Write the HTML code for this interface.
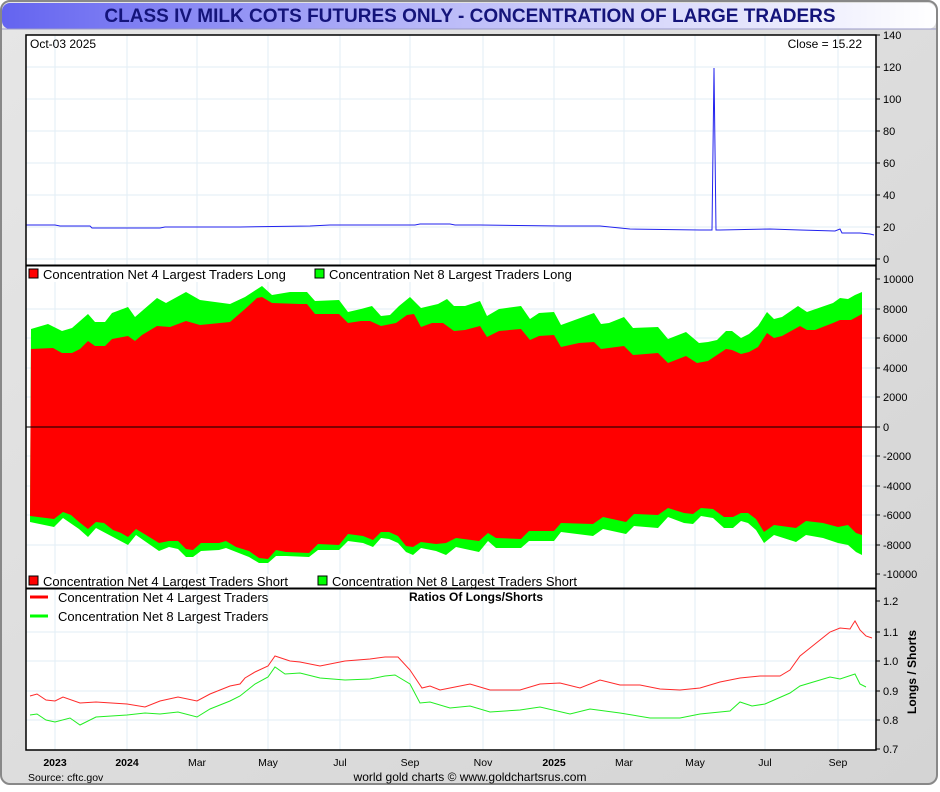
<!DOCTYPE html>
<html><head><meta charset="utf-8"><style>
html,body{margin:0;padding:0;background:#fff;}
body{width:940px;height:787px;overflow:hidden;font-family:"Liberation Sans",sans-serif;}
</style></head><body>
<svg width="940" height="787" viewBox="0 0 940 787" xmlns="http://www.w3.org/2000/svg" font-family="Liberation Sans, sans-serif">
<defs>
<linearGradient id="tg" x1="0" x2="1" y1="0" y2="0"><stop offset="0" stop-color="#6464f0"/><stop offset="0.45" stop-color="#b8b8f8"/><stop offset="1" stop-color="#ffffff"/></linearGradient>
<linearGradient id="bg" x1="0" x2="1" y1="0" y2="1"><stop offset="0" stop-color="#e6e6e6"/><stop offset="1" stop-color="#d4d4d4"/></linearGradient>
</defs>
<rect x="0" y="0" width="940" height="787" fill="#fff"/>
<rect x="1" y="1" width="936" height="783" rx="9" fill="url(#bg)" stroke="#888" stroke-width="2"/>
<rect x="2" y="3" width="934" height="26" rx="8" fill="url(#tg)"/>
<line x1="2" y1="29" x2="936" y2="29" stroke="#9a9ac8"/>
<text x="470" y="22" text-anchor="middle" font-size="19" font-weight="bold" fill="#14147a">CLASS IV MILK COTS FUTURES ONLY - CONCENTRATION OF LARGE TRADERS</text>
<rect x="26" y="35" width="850" height="715" fill="#fff"/>
<g stroke="#e2eef6" stroke-width="1">
<line x1="55" y1="35" x2="55" y2="750"/><line x1="127" y1="35" x2="127" y2="750"/><line x1="197" y1="35" x2="197" y2="750"/><line x1="268" y1="35" x2="268" y2="750"/><line x1="340" y1="35" x2="340" y2="750"/><line x1="410" y1="35" x2="410" y2="750"/><line x1="483" y1="35" x2="483" y2="750"/><line x1="554" y1="35" x2="554" y2="750"/><line x1="624" y1="35" x2="624" y2="750"/><line x1="695" y1="35" x2="695" y2="750"/><line x1="765" y1="35" x2="765" y2="750"/><line x1="838" y1="35" x2="838" y2="750"/>
<line x1="26" y1="67" x2="876" y2="67"/><line x1="26" y1="99" x2="876" y2="99"/><line x1="26" y1="131" x2="876" y2="131"/><line x1="26" y1="163" x2="876" y2="163"/><line x1="26" y1="195" x2="876" y2="195"/><line x1="26" y1="227" x2="876" y2="227"/><line x1="26" y1="259" x2="876" y2="259"/>
<line x1="26" y1="309" x2="876" y2="309"/><line x1="26" y1="338" x2="876" y2="338"/><line x1="26" y1="368" x2="876" y2="368"/><line x1="26" y1="397" x2="876" y2="397"/><line x1="26" y1="456" x2="876" y2="456"/><line x1="26" y1="486" x2="876" y2="486"/><line x1="26" y1="515" x2="876" y2="515"/><line x1="26" y1="545" x2="876" y2="545"/>
<line x1="26" y1="632" x2="876" y2="632"/><line x1="26" y1="661" x2="876" y2="661"/><line x1="26" y1="691" x2="876" y2="691"/><line x1="26" y1="720" x2="876" y2="720"/>
</g>
<!-- panel1 -->
<polyline fill="none" stroke="#2222ee" stroke-width="1" points="26,225 55,225 60,226 90,226 92,228 160,228 165,227 240,227 310,226 330,225 415,225 420,224 450,224 455,225 480,225 560,226 600,226 630,229 700,230 712,230 714,68 716,230 720,230 770,229 800,230 835,231 840,229 842,233 860,233 870,234 874,235"/>
<text x="30" y="48" font-size="12" fill="#000">Oct-03  2025</text>
<text x="862" y="48" font-size="12" fill="#000" text-anchor="end">Close = 15.22</text>
<!-- panel2 -->
<polygon fill="#00ff00" points="31,329 48,324 62,331 72,328 88,314 95,322 105,322 112,313 128,307 135,317 157,298 166,303 186,292 200,300 230,304 245,297 262,286 272,295 290,292 307,292 315,301 339,300 348,312 361,309 372,306 381,316 390,315 399,306 410,297 421,308 438,304 447,299 454,306 465,306 480,301 487,316 499,309 521,306 530,319 539,313 554,312 561,325 594,313 601,324 609,323 624,317 633,328 658,327 668,339 686,332 699,343 708,342 717,340 726,331 732,331 741,338 749,334 758,326 767,312 774,319 782,317 798,306 807,312 833,303 840,298 848,299 855,295 862,292
862,555 856,552 848,545 838,543 823,538 806,535 796,542 774,535 764,543 756,530 748,523 741,521 733,528 724,528 713,518 701,516 693,524 684,523 668,517 658,528 634,526 626,534 603,529 593,536 561,532 554,541 529,541 521,548 496,548 488,541 479,552 456,547 446,555 436,551 421,548 413,555 406,552 398,543 389,539 381,538 373,547 363,543 348,541 339,550 318,550 309,557 286,556 276,556 268,563 259,563 249,557 226,548 219,550 201,551 193,557 186,557 178,549 169,547 159,551 136,535 128,545 113,537 96,528 88,537 79,529 63,518 54,527 30,522"/>
<polygon fill="#ff0000" points="31,349 53,348 62,353 72,353 80,349 88,341 95,346 105,346 112,339 128,336 135,341 142,335 157,326 170,327 186,321 200,325 230,322 245,309 257,298 262,297 272,303 300,304 307,304 315,314 339,314 348,323 361,321 370,321 381,326 396,323 407,315 414,314 421,327 432,323 443,323 454,331 465,330 480,326 487,337 499,331 521,329 530,340 539,336 554,335 561,347 579,343 594,342 601,349 624,346 633,355 658,353 668,363 686,356 697,363 708,361 726,349 732,350 741,354 749,352 758,347 767,333 774,338 782,336 800,326 807,330 815,330 833,323 840,320 851,320 862,314
862,535 856,533 848,525 838,527 823,523 806,521 796,528 774,525 764,532 756,519 748,513 741,513 733,517 724,517 713,509 701,508 693,514 684,513 668,508 658,515 634,514 626,522 603,517 593,524 561,523 554,531 529,531 521,539 496,538 488,533 479,541 456,538 446,543 436,544 421,542 413,547 406,546 398,536 389,532 381,532 373,540 363,536 348,534 339,545 318,544 309,553 286,552 276,550 268,559 259,558 249,551 236,547 226,541 219,543 201,543 193,550 186,549 178,541 169,541 159,543 146,535 136,529 128,537 121,533 113,530 104,523 96,522 88,529 79,522 71,515 63,512 54,519 30,516"/>
<line x1="26" y1="427" x2="876" y2="427" stroke="#000" stroke-width="1"/>
<rect x="27" y="266" width="560" height="16" fill="#fff"/>
<rect x="29" y="269" width="9" height="9" fill="#ff0000" stroke="#000" stroke-width="1"/>
<text x="43" y="279" font-size="13" fill="#000">Concentration Net 4 Largest Traders Long</text>
<rect x="315" y="269" width="9" height="9" fill="#00ff00" stroke="#000" stroke-width="1"/>
<text x="329" y="279" font-size="13" fill="#000">Concentration Net 8 Largest Traders Long</text>
<rect x="27" y="574" width="560" height="14" fill="#fff"/>
<rect x="29" y="576" width="9" height="9" fill="#ff0000" stroke="#000" stroke-width="1"/>
<text x="43" y="586" font-size="13" fill="#000">Concentration Net 4 Largest Traders Short</text>
<rect x="318" y="576" width="9" height="9" fill="#00ff00" stroke="#000" stroke-width="1"/>
<text x="332" y="586" font-size="13" fill="#000">Concentration Net 8 Largest Traders Short</text>
<!-- panel3 -->
<polyline fill="none" stroke="#ff2a2a" stroke-width="1" points="30,696 37,694 46,700 55,701 63,697 80,703 96,702 127,704 145,707 160,701 178,697 197,701 210,694 230,686 240,684 245,678 255,672 268,666 275,656 290,661 300,662 320,666 345,661 370,659 385,657 398,657 410,670 422,688 430,686 440,690 450,688 470,684 490,690 520,690 540,684 560,683 580,688 600,680 620,685 640,685 660,689 680,690 700,688 720,682 740,678 760,676 780,676 790,670 800,656 815,644 830,632 840,628 850,629 853,624 855,621 860,630 866,636 872,638"/>
<polyline fill="none" stroke="#22ee22" stroke-width="1" points="30,715 37,714 46,720 55,722 70,718 80,725 96,717 127,715 145,713 160,714 178,712 197,717 210,709 230,701 240,696 245,692 255,684 268,677 275,667 285,674 300,673 320,678 345,680 370,679 385,676 395,675 410,684 420,703 430,702 450,708 470,706 490,712 520,710 540,707 570,714 590,709 620,713 650,718 680,718 700,714 720,712 730,711 740,702 752,706 765,704 790,693 800,686 820,680 830,677 840,679 855,674 860,684 866,687"/>
<line x1="30" y1="597" x2="48" y2="597" stroke="#ff0000" stroke-width="3"/>
<text x="58" y="602" font-size="13" fill="#000">Concentration Net 4 Largest Traders</text>
<line x1="30" y1="616" x2="48" y2="616" stroke="#00ff00" stroke-width="3"/>
<text x="58" y="621" font-size="13" fill="#000">Concentration Net 8 Largest Traders</text>
<text x="476" y="601" font-size="12" font-weight="bold" text-anchor="middle" fill="#000">Ratios Of Longs/Shorts</text>
<!-- frames -->
<rect x="26" y="35" width="850" height="715" fill="none" stroke="#000" stroke-width="1.5"/>
<line x1="26" y1="265.5" x2="876" y2="265.5" stroke="#000" stroke-width="2"/>
<line x1="26" y1="588.5" x2="876" y2="588.5" stroke="#000" stroke-width="2"/>
<!-- right axis -->
<g font-size="11" fill="#000">
<text x="883" y="39">140</text><text x="883" y="71">120</text><text x="883" y="103">100</text><text x="883" y="135">80</text><text x="883" y="167">60</text><text x="883" y="199">40</text><text x="883" y="231">20</text><text x="883" y="263">0</text>
<text x="883" y="283">10000</text><text x="883" y="313">8000</text><text x="883" y="342">6000</text><text x="883" y="372">4000</text><text x="883" y="401">2000</text><text x="883" y="431">0</text><text x="883" y="460">-2000</text><text x="883" y="490">-4000</text><text x="883" y="519">-6000</text><text x="883" y="549">-8000</text><text x="883" y="578">-10000</text>
<text x="883" y="605">1.2</text><text x="883" y="636">1.1</text><text x="883" y="665">1.0</text><text x="883" y="695">0.9</text><text x="883" y="724">0.8</text><text x="883" y="753">0.7</text>
</g>
<g stroke="#000" stroke-width="1">
<line x1="876" y1="35" x2="880" y2="35"/><line x1="876" y1="67" x2="880" y2="67"/><line x1="876" y1="99" x2="880" y2="99"/><line x1="876" y1="131" x2="880" y2="131"/><line x1="876" y1="163" x2="880" y2="163"/><line x1="876" y1="195" x2="880" y2="195"/><line x1="876" y1="227" x2="880" y2="227"/><line x1="876" y1="259" x2="880" y2="259"/>
<line x1="876" y1="279" x2="880" y2="279"/><line x1="876" y1="309" x2="880" y2="309"/><line x1="876" y1="338" x2="880" y2="338"/><line x1="876" y1="368" x2="880" y2="368"/><line x1="876" y1="397" x2="880" y2="397"/><line x1="876" y1="427" x2="880" y2="427"/><line x1="876" y1="456" x2="880" y2="456"/><line x1="876" y1="486" x2="880" y2="486"/><line x1="876" y1="515" x2="880" y2="515"/><line x1="876" y1="545" x2="880" y2="545"/><line x1="876" y1="574" x2="880" y2="574"/>
<line x1="876" y1="601" x2="880" y2="601"/><line x1="876" y1="632" x2="880" y2="632"/><line x1="876" y1="661" x2="880" y2="661"/><line x1="876" y1="691" x2="880" y2="691"/><line x1="876" y1="720" x2="880" y2="720"/><line x1="876" y1="749" x2="880" y2="749"/>
</g>
<text transform="translate(916,672) rotate(-90)" font-size="12" font-weight="bold" text-anchor="middle" fill="#000">Longs / Shorts</text>
<!-- x axis -->
<g font-size="10.5" fill="#000" text-anchor="middle">
<text x="55" y="766" font-weight="bold">2023</text><text x="127" y="766" font-weight="bold">2024</text><text x="197" y="766">Mar</text><text x="268" y="766">May</text><text x="340" y="766">Jul</text><text x="410" y="766">Sep</text><text x="483" y="766">Nov</text><text x="554" y="766" font-weight="bold">2025</text><text x="624" y="766">Mar</text><text x="695" y="766">May</text><text x="765" y="766">Jul</text><text x="838" y="766">Sep</text>
</g>
<text x="28" y="781" font-size="10.5" fill="#000">Source: cftc.gov</text>
<text x="470" y="781" font-size="12" text-anchor="middle" fill="#000">world gold charts © www.goldchartsrus.com</text>
</svg>
</body></html>
